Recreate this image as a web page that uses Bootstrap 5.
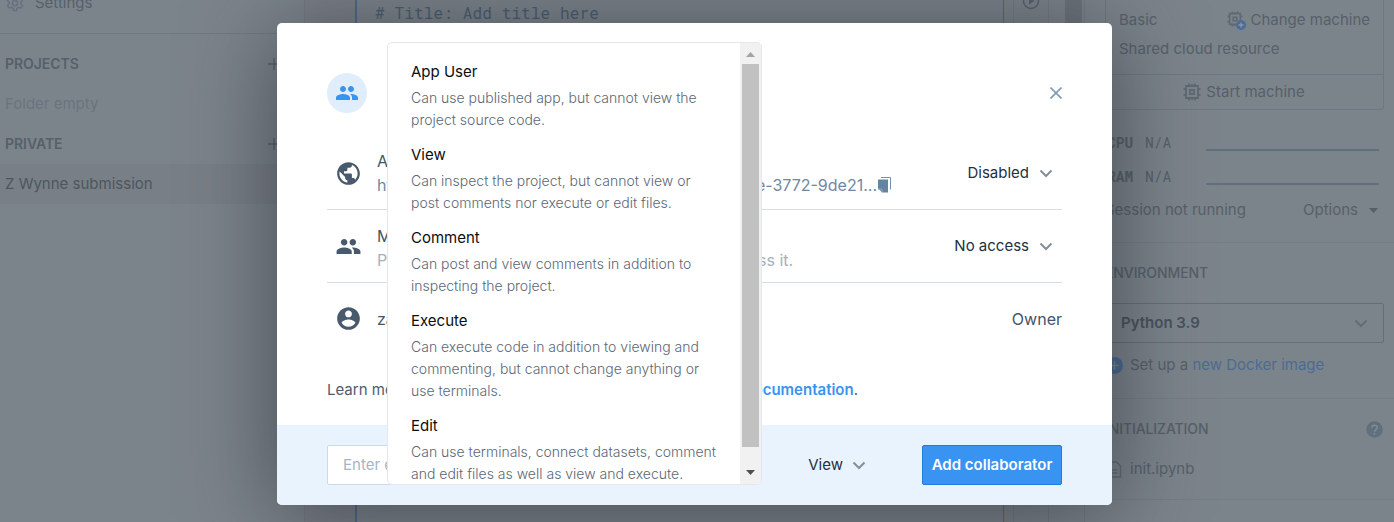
<!DOCTYPE html>
<html lang="en">
<head>
<meta charset="utf-8">
<meta name="viewport" content="width=device-width, initial-scale=1">
<title>Share project</title>
<link href="https://cdn.jsdelivr.net/npm/bootstrap@5.3.0/dist/css/bootstrap.min.css" rel="stylesheet">
<style>
body{font-family:Inter,"Liberation Sans",sans-serif;font-size:15px;line-height:20px;height:522px;background:#7c848b;color:#56606a;overflow:hidden}
svg{display:block;flex:none}
.page{height:522px}
.side{width:305px;border-right:1px solid #737b84}
.side .line{height:40px;padding-left:5px;padding-right:24px}
.side .top{height:50px;margin:-16px 0 10px;padding-left:6px;border-bottom:1px solid #707982;padding-bottom:12px}
.head{font-size:14px;font-weight:500}
.side .head{font-weight:600;letter-spacing:-.05px}
.muted{color:#68747f}
.picked{background:#797f86;color:#4d565f}
.gutter{width:50px;background:#7b8088}
.cell{width:649px;border-left:2px solid #4c698c;border-right:1px solid #4c698c;padding:2px 0 0 18px;background:#7c848b}
.code{font:16px/21px "Roboto Mono","DejaVu Sans Mono",monospace;letter-spacing:.14px;color:#495d73}
.tools{width:36px;margin-left:9px;border-left:1px solid #737b84;border-right:1px solid #737b84;padding-left:8px}
.track{width:20px;margin-left:16px;border-right:1px solid #737b84}
.track div{width:17px;height:100px;background:#6c737a}
.right{width:309px}
.machine{margin:0 10px 0 20px;height:110px;border:1px solid #6f7882;border-top:0;border-radius:0 0 4px 4px}
.machine .up{height:75px;padding:10px 13px 0;border-bottom:1px solid #6f7882}
.meters{margin-top:16px}
.meter{height:34px;padding-left:22px;padding-right:15px}
.meter b,.meter span{font-family:"Roboto Mono","DejaVu Sans Mono",monospace;font-size:14.500px;width:38px}
.meter i{width:173px;height:2px;background:#60707f;margin-top:14px}
.session{height:32px;padding:0 16px 0 20px}
.rule{border-top:1px solid #757d86}
.pick{height:40px;border:1px solid #656f7a;border-radius:2px;margin:0 10px 0 16px;padding:0 15px 0 19px;font-weight:600;color:#48515b}
.blue{color:#4c6b92}
.dialog{position:absolute;left:277px;top:23px;width:835px;height:482px;background:#fff;border-radius:5px;overflow:hidden;color:#4d5c70}
.shade{position:absolute;left:277px;top:23px;width:835px;height:482px;border-radius:5px;box-shadow:0 10px 90px rgba(34,38,45,.6)}
.body-pad{height:402px;padding:0 50px}
.avatar{width:40px;height:40px;background:#e0eefc;margin-top:50px}
.entry{height:73px;border-bottom:1px solid #d5dee6;padding-left:9px;color:#44546a;font-size:16px}
.entry .txt{width:514px;margin-left:16px}
.entry .txt div{height:24px;line-height:24px}
.url{color:#7088a5}
.faint{color:#a7afba}
.choice{color:#23303f;font-size:15px}
.foot{height:80px;background:#e9f3fe;padding:0 50px}
.mail{width:400px;height:40px;background:#fff;border:1px solid #ccdae6;border-radius:2px;padding-left:15px;color:#a5b5c7}
.add{width:140px;height:40px;background:#3993f0;border:1px solid #1c7cdc;border-radius:2px;font-size:15px;font-weight:600;color:#fff;padding:0}
.menu{position:absolute;left:387px;top:42px;width:375px;height:443px;background:#fff;border:1px solid #e3e7ee;border-radius:5px;overflow:hidden}
.opts{width:352px;flex:none;padding:18px 0 0 23px}
.opts h6{font-size:15px;line-height:22px;font-weight:400;color:#0c0d0f;margin:0 0 4px}
.opts p{font-size:14px;line-height:22px;font-weight:300;color:#5c6774;margin:0 0 13px;white-space:nowrap}
.bar{width:21px;flex:none;background:#f1f1f1;padding-left:2px}
.thumb{width:17px;height:383px;background:#c1c1c1}
</style>
</head>
<body>
<svg width="0" height="0" class="position-absolute">
<symbol id="people" viewBox="0 0 24 24"><path d="M16 11c1.66 0 2.99-1.34 2.99-3S17.66 5 16 5s-3 1.34-3 3 1.34 3 3 3zm-8 0c1.66 0 2.99-1.34 2.99-3S9.66 5 8 5 5 6.34 5 8s1.340 3 3 3zm0 2c-2.330 0-7 1.170-7 3.500V19h14v-2.500C15 14.170 10.330 13 8 13zm8 0c-.290 0-.620.020-.970.050 1.160.840 1.970 1.970 1.970 3.450V19h6v-2.500c0-2.330-4.670-3.500-7-3.500z"/></symbol>
<symbol id="down" viewBox="0 0 14 9"><path d="M1.500 1.500 7 7l5.500-5.500" fill="none" stroke="currentColor" stroke-width="2"/></symbol>
<symbol id="chip" viewBox="0 0 18 18"><path d="M3 3h12v12H3zM7 7h4v4H7zM6 .5v3M12 .5v3M6 14.500v3M12 14.500v3M9 1v2M9 15v2M.5 6h3M.5 12h3M14.500 6h3M14.500 12h3" fill="none" stroke="currentColor" stroke-width="1.800"/></symbol>
</svg>
<div class="page d-flex overflow-hidden">
  <aside class="side flex-shrink-0">
    <div class="top d-flex align-items-center gap-2"><svg width="18" height="18" viewBox="0 0 24 24" fill="none" stroke="#66717d" stroke-width="2"><circle cx="12" cy="12" r="3.500"/><path d="M10 2h4l.6 3 2.400 1.400 3-1 2 3.500L19.700 11v2l2.300 2.100-2 3.500-3-1-2.400 1.400-.6 3h-4l-.6-3L7 17.600l-3 1-2-3.500L4.300 13v-2L2 8.900l2-3.500 3 1L9.400 5z"/></svg><span style="margin-left:3px">Settings</span></div>
    <div class="line d-flex align-items-center justify-content-between head"><span>PROJECTS</span><svg width="12" height="12" stroke="#56616c" stroke-width="1.500"><path d="M6 0v12M0 6h12"/></svg></div>
    <div class="line d-flex align-items-center muted">Folder empty</div>
    <div class="line d-flex align-items-center justify-content-between head"><span>PRIVATE</span><svg width="12" height="12" stroke="#56616c" stroke-width="1.500"><path d="M6 0v12M0 6h12"/></svg></div>
    <div class="line d-flex align-items-center picked">Z Wynne submission</div>
  </aside>
  <div class="gutter flex-shrink-0"></div>
  <main class="cell flex-shrink-0"><div class="code"># Title: Add title here</div></main>
  <div class="tools flex-shrink-0"><svg width="18" height="18" viewBox="0 0 18 18" style="margin-top:-8px"><circle cx="9" cy="9" r="7.500" fill="none" stroke="#57616d" stroke-width="1.500"/><path d="M7 5.500v7L12.500 9z" fill="#57616d"/></svg></div>
  <div class="track flex-shrink-0"><div></div></div>
  <aside class="right flex-shrink-0">
    <section class="machine">
      <div class="up"><div class="d-flex align-items-center justify-content-between"><span>Basic</span><span class="d-flex align-items-center" style="gap:4px"><svg width="19" height="19" viewBox="0 0 19 19" color="#5f6973"><use href="#chip" width="16" height="16"/><circle cx="14" cy="14" r="5" fill="#496d98"/><path d="M14 11.500v5M11.500 14h5" stroke="#8c959d" stroke-width="1.300"/></svg>Change machine</span></div><div style="padding-top:9px">Shared cloud resource</div></div>
      <div class="d-flex align-items-center justify-content-center" style="gap:5px;padding:7px 1px 0 0"><svg width="18" height="18" color="#5f6973"><use href="#chip"/></svg>Start machine</div>
    </section>
    <div class="meters">
      <div class="meter d-flex align-items-center"><b>CPU</b><span>N/A</span><i class="ms-auto"></i></div>
      <div class="meter d-flex align-items-center"><b>RAM</b><span>N/A</span><i class="ms-auto"></i></div>
    </div>
    <div class="session d-flex justify-content-between align-items-center"><span>Session not running</span><span class="d-flex align-items-center" style="gap:11px">Options<svg width="9" height="5" fill="#535f6b"><path d="M0 0h9L4.500 5z"/></svg></span></div>
    <div class="rule head" style="margin-top:16px;padding:20px 0 20px 20px;letter-spacing:-.1px">ENVIRONMENT</div>
    <div class="pick d-flex align-items-center justify-content-between"><span>Python 3.9</span><svg width="14" height="9" color="#626d78"><use href="#down"/></svg></div>
    <div class="d-flex align-items-center" style="padding:12px 0 23px 21px"><svg width="17" height="17" viewBox="0 0 16 16"><circle cx="8" cy="8" r="8" fill="#486993"/><path d="M8 4v8M4 8h8" stroke="#7c848b" stroke-width="1.500"/></svg><span style="margin-left:7px">Set up a <span class="blue">new Docker image</span></span></div>
    <div class="rule d-flex align-items-center justify-content-between head" style="padding:20px 11px 0 20px;letter-spacing:-.1px"><span>INITIALIZATION</span><svg width="17" height="17" viewBox="0 0 17 17"><circle cx="8.500" cy="8.500" r="8.300" fill="#61707e"/><path d="M5.900 6.700c0-3.300 5.300-3.200 5.300 0 0 1.800-2.600 2-2.600 4M8.500 12v1.700" fill="none" stroke="#818a92" stroke-width="1.600"/></svg></div>
    <div class="d-flex align-items-center" style="padding:20px 0 20px 22px"><svg width="15" height="17" viewBox="0 0 14 17" fill="none" stroke="#5f6b76" stroke-width="1.500"><path d="M1 1h8l4 4v11H1zM4 9h6M4 12h6"/></svg><span style="margin-left:8px">init.ipynb</span></div>
    <div class="rule"></div>
  </aside>
</div>
<div class="shade"></div>
<div class="dialog" role="dialog">
  <div class="body-pad overflow-hidden">
    <div class="d-flex justify-content-between">
      <div class="avatar rounded-circle d-flex align-items-center justify-content-center"><svg width="24" height="24" fill="#3993f0"><use href="#people"/></svg></div>
      <svg width="12" height="12" style="margin-top:64px" stroke="#8299b5" stroke-width="1.600"><path d="M.5.500l11 11M11.500.500l-11 11"/></svg>
    </div>
    <div class="entry d-flex align-items-center mt-4">
      <svg width="25" height="25" viewBox="1 1 22 22" fill="#4a5a6d"><path d="M12 2C6.480 2 2 6.480 2 12s4.480 10 10 10 10-4.480 10-10S17.520 2 12 2zm-1 17.930c-3.950-.490-7-3.850-7-7.930 0-.620.080-1.210.210-1.790L9 15v1c0 1.100.9 2 2 2v1.930zm6.900-2.540c-.260-.810-1-1.390-1.900-1.390h-1v-3c0-.550-.450-1-1-1H8v-2h2c.550 0 1-.450 1-1V7h2c1.100 0 2-.9 2-2v-.410c2.930 1.190 5 4.060 5 7.410 0 2.080-.8 3.970-2.100 5.390z"/></svg>
      <div class="txt"><div>An</div><div class="d-flex align-items-center url"><span>http</span><span class="ms-auto" style="margin-right:1px">e-3772-9de21...</span><svg width="13" height="16" viewBox="0 0 13 16"><path d="M3 .5h9.500v12" fill="none" stroke="#7891ac"/><path d="M0 2.500h10V15.500H4.500L0 11.500z" fill="#6683a3"/><path d="M0 12h4v3.500" fill="none" stroke="#91a6bd"/></svg></div></div>
      <span class="choice ms-auto">Disabled</span><svg width="14" height="9" color="#858e98" style="margin:0 9px 0 10px"><use href="#down"/></svg>
    </div>
    <div class="entry d-flex align-items-center">
      <svg width="25" height="25" viewBox=".5 .5 23 23" fill="#4a5a6d"><use href="#people" width="24" height="24"/></svg>
      <div class="txt pt-1"><div>Me</div><div class="d-flex faint"><span>Pe</span><span style="margin-left:325px">access it.</span></div></div>
      <span class="choice ms-auto">No access</span><svg width="14" height="9" color="#858e98" style="margin:0 9px 0 10px"><use href="#down"/></svg>
    </div>
    <div class="entry d-flex align-items-center border-0" style="padding-bottom:2px">
      <svg width="25" height="25" viewBox="1 1 22 22" fill="#4a5a6d"><path d="M12 2C6.480 2 2 6.480 2 12s4.480 10 10 10 10-4.480 10-10S17.520 2 12 2zm0 3c1.660 0 3 1.340 3 3s-1.340 3-3 3-3-1.340-3-3 1.340-3 3-3zm0 14.200c-2.500 0-4.710-1.280-6-3.220.030-1.990 4-3.080 6-3.080 1.990 0 5.970 1.090 6 3.080-1.290 1.940-3.500 3.220-6 3.220z"/></svg>
      <div class="txt">zac</div><span class="ms-auto">Owner</span>
    </div>
    <div class="d-flex justify-content-between" style="width:531px;margin-top:24px"><span>Learn more</span><span><b style="color:#3993f0;font-weight:600">documentation</b>.</span></div>
  </div>
  <div class="foot d-flex align-items-center">
    <div class="mail d-flex align-items-center">Enter email</div>
    <span class="choice ms-auto">View</span><svg width="14" height="9" color="#858e98" style="margin:0 56px 0 9px"><use href="#down"/></svg>
    <button class="btn add" type="button">Add collaborator</button>
  </div>
</div>
<div class="menu d-flex">
  <div class="opts">
    <h6>App User</h6><p>Can use published app, but cannot view the<br>project source code.</p>
    <h6>View</h6><p>Can inspect the project, but cannot view or<br>post comments nor execute or edit files.</p>
    <h6>Comment</h6><p>Can post and view comments in addition to<br>inspecting the project.</p>
    <h6>Execute</h6><p>Can execute code in addition to viewing and<br>commenting, but cannot change anything or<br>use terminals.</p>
    <h6>Edit</h6><p>Can use terminals, connect datasets, comment<br>and edit files as well as view and execute.</p>
  </div>
  <div class="bar d-flex flex-column"><svg width="17" height="21" fill="#a3a3a3"><path d="M4 14h9L8.500 9z"/></svg><div class="thumb"></div><svg width="17" height="37" fill="#505050"><path d="M4 23h9l-4.500 5z"/></svg></div>
</div>
<script src="https://cdn.jsdelivr.net/npm/bootstrap@5.3.0/dist/js/bootstrap.bundle.min.js"></script>
</body>
</html>
